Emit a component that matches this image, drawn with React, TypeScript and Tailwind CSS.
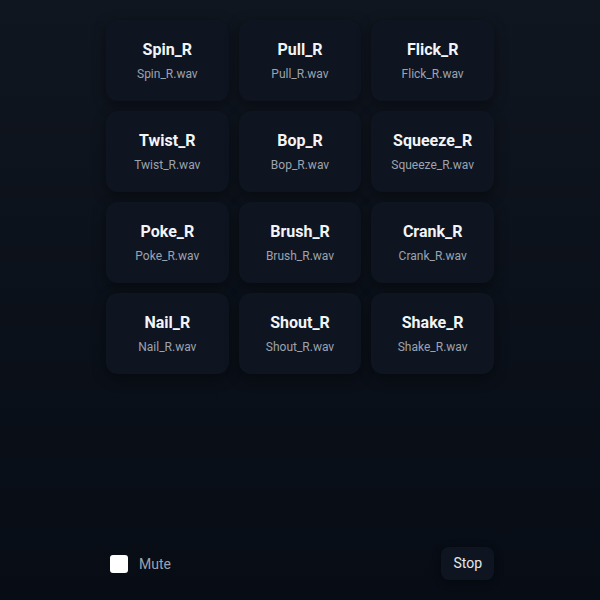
import { useState } from 'react'

const sounds = [
  'Spin_R', 'Pull_R', 'Flick_R',
  'Twist_R', 'Bop_R', 'Squeeze_R',
  'Poke_R', 'Brush_R', 'Crank_R',
  'Nail_R', 'Shout_R', 'Shake_R',
]

export default function App() {
  const [muted, setMuted] = useState(false)
  const [playing, setPlaying] = useState<string | null>(null)

  return (
    <div
      className="h-screen w-full flex flex-col bg-gradient-to-b from-[#10161f] to-[#070c15] text-white"
      style={{ fontFamily: 'Roboto, "Noto Sans", sans-serif' }}
    >
      <div className="flex-1 flex justify-center pt-5">
        <div className="w-[388px] grid grid-cols-3 gap-x-[10px] gap-y-[10px] content-start">
          {sounds.map((name) => (
            <button
              key={name}
              onClick={() => setPlaying(name)}
              className="h-[81px] rounded-xl bg-[#0e1521] shadow-[0_4px_14px_rgba(0,0,0,0.4)] flex flex-col items-center justify-center gap-[6px]"
            >
              <span className="text-[16px] leading-5 font-bold text-[#f3f4f6]">{name}</span>
              <span className="text-[12px] leading-4 text-[#9ca3af]">{name}.wav</span>
            </button>
          ))}
        </div>
      </div>

      <div className="w-[388px] mx-auto flex items-center justify-between pb-5 pl-1">
        <label className="flex items-center gap-[11px] cursor-pointer">
          <input
            type="checkbox"
            checked={muted}
            onChange={(e) => setMuted(e.target.checked)}
            className="w-[18px] h-[18px] appearance-none rounded-[3px] bg-white"
          />
          <span className="text-[14px] pt-[2px] text-[#9ca3af]">Mute</span>
        </label>
        <button
          onClick={() => setPlaying(null)}
          className="h-[33px] px-3 rounded-lg bg-[#0e1521] text-[14px] text-[#e5e7eb] shadow-[0_2px_8px_rgba(0,0,0,0.35)]"
        >
          Stop
        </button>
      </div>
      <span className="hidden">{playing}</span>
    </div>
  )
}
